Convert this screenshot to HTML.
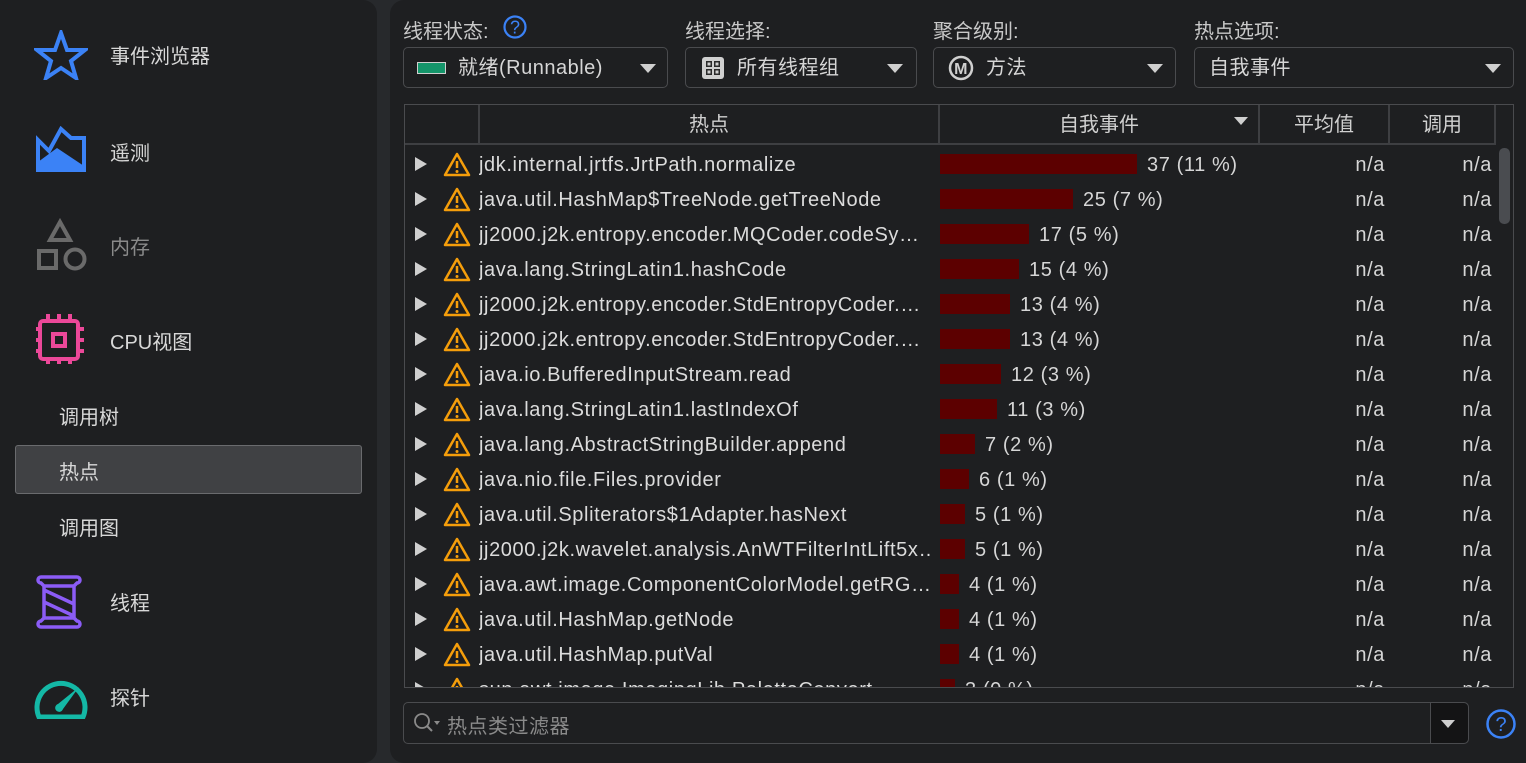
<!DOCTYPE html>
<html><head><meta charset="utf-8"><style>
*{box-sizing:border-box;margin:0;padding:0}
body{width:1526px;height:763px;background:#27292c;font-family:"Liberation Sans","Noto Sans CJK SC",sans-serif;color:#d6d6d6;position:relative;overflow:hidden}
.abs{position:absolute}
#left{left:0;top:0;width:377px;height:763px;background:#1e1f21;border-radius:0 14px 14px 0}
#right{left:390px;top:0;width:1136px;height:763px;background:#1e1f21;border-radius:14px 0 0 14px}
.nav{position:absolute;left:110px;font-size:20px;color:#d8d8d8}
.sub{position:absolute;left:59px;font-size:20px;color:#d8d8d8}
.lbl{position:absolute;top:15px;font-size:20px;color:#c8c8c8}
.dd{position:absolute;top:47px;height:41px;border:1px solid #4a4b4e;border-radius:5px;background:#1e1f21;font-size:20px;line-height:41px;letter-spacing:0.5px}
.tri{position:absolute;width:0;height:0;border-left:8px solid transparent;border-right:8px solid transparent;border-top:9px solid #cfcfcf}
#tbl{left:404px;top:104px;width:1110px;height:584px;border:1px solid #4a4b4e;overflow:hidden}
.th{position:absolute;top:0;height:40px;border-right:2px solid #3e3f42;border-bottom:2px solid #3e3f42;font-size:20px;line-height:40px;text-align:center;color:#d0d0d0}
.row{position:absolute;left:0;height:35px;width:1090px;font-size:20px;line-height:37px;letter-spacing:0.6px}
.row .ar{position:absolute;left:10px;top:10px;width:0;height:0;border-top:7px solid transparent;border-bottom:7px solid transparent;border-left:12px solid #cfcfcf}
.row svg{position:absolute;left:37px;top:4px}
.row .nm{position:absolute;left:74px;white-space:nowrap;width:452px;overflow:hidden;color:#dcdcdc}
.row .bar{position:absolute;left:535px;top:7px;height:20px;background:#5c0000}
.row .v{position:absolute;white-space:nowrap}
.row .na1{position:absolute;right:110px}
.row .na2{position:absolute;right:3px}
</style></head><body>
<div id="left" class="abs"></div>
<div id="right" class="abs"></div>

<svg class="abs" style="left:34px;top:30px" width="54" height="50" viewBox="0 0 54 50"><polygon points="27,3 33,20 51,20 37,31 42,48 27,38 12,48 17,31 3,20 21,20" fill="none" stroke="#3b82f6" stroke-width="4"/></svg>
<div class="nav" style="top:40px">事件浏览器</div>
<svg class="abs" style="left:36px;top:126px" width="50" height="46" viewBox="0 0 50 46"><path d="M2 14 L13 25 L25 3 L35 12 L48 12 L48 44 L2 44 Z" fill="none" stroke="#3b82f6" stroke-width="4" stroke-linejoin="miter"/><path d="M2 44 L2 36 L21 22 L48 40 L48 44 Z" fill="#3b82f6"/></svg>
<div class="nav" style="top:137px">遥测</div>
<svg class="abs" style="left:36px;top:218px" width="52" height="54" viewBox="0 0 52 54"><polygon points="24,4 34,22 14,22" fill="none" stroke="#6a6a6a" stroke-width="4"/><rect x="3" y="33" width="17" height="17" fill="none" stroke="#6a6a6a" stroke-width="4"/><circle cx="39" cy="41" r="9.5" fill="none" stroke="#6a6a6a" stroke-width="4"/></svg>
<div class="nav" style="top:231px;color:#8a8a8a">内存</div>
<svg class="abs" style="left:36px;top:314px" width="50" height="50" viewBox="0 0 50 50"><rect x="4" y="7" width="38" height="38" rx="3" fill="none" stroke="#ec4899" stroke-width="4"/><rect x="17" y="20" width="12" height="12" fill="none" stroke="#ec4899" stroke-width="4"/><path d="M12 0v7M23 0v7M34 0v7M12 45v6M23 45v6M34 45v6M0 15h4M0 26h4M0 37h4M42 15h6M42 26h6M42 37h6" stroke="#ec4899" stroke-width="4"/></svg>
<div class="nav" style="top:326px">CPU视图</div>
<div class="sub" style="top:401px">调用树</div>
<div class="abs" style="left:15px;top:445px;width:347px;height:49px;background:#404144;border:1px solid #6a6b6e;border-radius:3px"></div>
<div class="sub" style="top:456px">热点</div>
<div class="sub" style="top:512px">调用图</div>
<svg class="abs" style="left:36px;top:574px" width="50" height="56" viewBox="0 0 50 56"><path d="M5 3h36a3 3 0 0 1 0 6l-3 3v32l3 3a3 3 0 0 1 0 6H5a3 3 0 0 1 0-6l3-3V12L5 9a3 3 0 0 1 0-6z M8 12h30 M8 44h30 M8 16l30 14 M8 28l30 14" fill="none" stroke="#8b5cf6" stroke-width="3.5"/></svg>
<div class="nav" style="top:587px">线程</div>
<svg class="abs" style="left:33px;top:673px" width="56" height="46" viewBox="0 0 56 46"><path d="M6 44A24 24 0 1 1 50 44z" fill="none" stroke="#14b8a6" stroke-width="5"/><path d="M46 14L30 36a4 4 0 1 1-5-5z" fill="#14b8a6"/></svg>
<div class="nav" style="top:682px">探针</div>

<div class="lbl" style="left:403px">线程状态:</div>
<svg class="abs" style="left:503px;top:15px" width="24" height="24" viewBox="0 0 24 24"><circle cx="12" cy="12" r="10.5" fill="none" stroke="#3b82f6" stroke-width="2.2"/><text x="12" y="18.5" text-anchor="middle" font-size="18" fill="#3b82f6" font-family="Liberation Sans">?</text></svg>
<div class="lbl" style="left:685px">线程选择:</div>
<div class="lbl" style="left:933px">聚合级别:</div>
<div class="lbl" style="left:1194px">热点选项:</div>

<div class="dd" style="left:403px;width:265px"><div class="abs" style="left:13px;top:14px;width:29px;height:12px;background:#14956a;border:1px solid #cfcfcf"></div><span class="abs" style="left:54px">就绪(Runnable)</span><div class="tri" style="left:236px;top:16px"></div></div>
<div class="dd" style="left:685px;width:232px"><svg class="abs" style="left:15px;top:8px" width="24" height="24" viewBox="0 0 24 24"><rect x="1" y="1" width="22" height="22" rx="3" fill="#d0d0d0"/><rect x="5" y="5" width="6" height="6" fill="#2a2a2a"/><rect x="13" y="5" width="6" height="6" fill="#2a2a2a"/><rect x="5" y="13" width="6" height="6" fill="#2a2a2a"/><rect x="13" y="13" width="6" height="6" fill="#2a2a2a"/><rect x="6.5" y="6.5" width="3" height="3" fill="#d0d0d0"/><rect x="14.5" y="6.5" width="3" height="3" fill="#d0d0d0"/><rect x="6.5" y="14.5" width="3" height="3" fill="#d0d0d0"/><rect x="14.5" y="14.5" width="3" height="3" fill="#d0d0d0"/></svg><span class="abs" style="left:51px">所有线程组</span><div class="tri" style="left:201px;top:16px"></div></div>
<div class="dd" style="left:933px;width:243px"><svg class="abs" style="left:14px;top:7px" width="26" height="26" viewBox="0 0 26 26"><circle cx="13" cy="13" r="11" fill="none" stroke="#d0d0d0" stroke-width="2.5"/><text x="13" y="19" text-anchor="middle" font-size="16" font-weight="bold" fill="#d0d0d0" font-family="Liberation Sans">M</text></svg><span class="abs" style="left:52px">方法</span><div class="tri" style="left:213px;top:16px"></div></div>
<div class="dd" style="left:1194px;width:320px"><span class="abs" style="left:14px">自我事件</span><div class="tri" style="left:290px;top:16px"></div></div>

<div id="tbl" class="abs">
<div class="th" style="left:0;width:75px"></div>
<div class="th" style="left:75px;width:460px">热点</div>
<div class="th" style="left:535px;width:320px">自我事件<div class="tri" style="left:294px;top:12px;border-left-width:7px;border-right-width:7px;border-top-width:8px"></div></div>
<div class="th" style="left:855px;width:130px">平均值</div>
<div class="th" style="left:985px;width:106px">调用</div>
<div class="abs" style="left:1094px;top:43px;width:11px;height:76px;background:#4a4c50;border-radius:5px"></div>
<div id="rows"></div>
</div>

<div class="abs" style="left:403px;top:702px;width:1066px;height:42px;border:1px solid #4a4b4e;border-radius:5px"></div>
<div class="abs" style="left:1430px;top:703px;width:38px;height:40px;background:#141415;border-left:1px solid #4a4b4e;border-radius:0 5px 5px 0"></div>
<div class="tri" style="left:1441px;top:720px;border-left-width:7px;border-right-width:7px;border-top-width:8px"></div>
<svg class="abs" style="left:413px;top:712px" width="30" height="22" viewBox="0 0 30 22"><circle cx="9" cy="9" r="7" fill="none" stroke="#8a8a8a" stroke-width="1.8"/><path d="M14 14l5 5" stroke="#8a8a8a" stroke-width="2"/><path d="M21 9h6l-3 4z" fill="#8a8a8a"/></svg>
<div class="abs" style="left:447px;top:710px;font-size:20px;color:#8a8a8a;letter-spacing:0.5px">热点类过滤器</div>
<svg class="abs" style="left:1485px;top:708px" width="32" height="32" viewBox="0 0 32 32"><circle cx="16" cy="16" r="13.5" fill="none" stroke="#3b82f6" stroke-width="2.5"/><text x="16" y="23" text-anchor="middle" font-size="20" fill="#3b82f6" font-family="Liberation Sans">?</text></svg>

<script>
var d=[["jdk.internal.jrtfs.JrtPath.normalize",197,"37 (11 %)"],["java.util.HashMap$TreeNode.getTreeNode",133,"25 (7 %)"],["jj2000.j2k.entropy.encoder.MQCoder.codeSy…",89,"17 (5 %)"],["java.lang.StringLatin1.hashCode",79,"15 (4 %)"],["jj2000.j2k.entropy.encoder.StdEntropyCoder.…",70,"13 (4 %)"],["jj2000.j2k.entropy.encoder.StdEntropyCoder.…",70,"13 (4 %)"],["java.io.BufferedInputStream.read",61,"12 (3 %)"],["java.lang.StringLatin1.lastIndexOf",57,"11 (3 %)"],["java.lang.AbstractStringBuilder.append",35,"7 (2 %)"],["java.nio.file.Files.provider",29,"6 (1 %)"],["java.util.Spliterators$1Adapter.hasNext",25,"5 (1 %)"],["jj2000.j2k.wavelet.analysis.AnWTFilterIntLift5x…",25,"5 (1 %)"],["java.awt.image.ComponentColorModel.getRG…",19,"4 (1 %)"],["java.util.HashMap.getNode",19,"4 (1 %)"],["java.util.HashMap.putVal",19,"4 (1 %)"],["sun.awt.image.ImagingLib.PaletteConvert",15,"3 (0 %)"]];
var h="";d.forEach(function(r,i){var t=42+i*35;h+='<div class="row" style="top:'+t+'px"><div class="ar"></div><svg width="30" height="27" viewBox="0 0 30 27"><path d="M15 3L27 24H3z" fill="none" stroke="#f59e0b" stroke-width="2.5" stroke-linejoin="round"/><path d="M15 10v7" stroke="#f59e0b" stroke-width="2.5"/><circle cx="15" cy="20.5" r="1.5" fill="#f59e0b"/></svg><span class="nm">'+r[0].replace(/\$/g,"&#36;")+'</span><div class="bar" style="width:'+r[1]+'px"></div><span class="v" style="left:'+(535+r[1]+10)+'px">'+r[2]+'</span><span class="na1">n/a</span><span class="na2">n/a</span></div>';});
document.getElementById("rows").innerHTML=h;
</script>
</body></html>
